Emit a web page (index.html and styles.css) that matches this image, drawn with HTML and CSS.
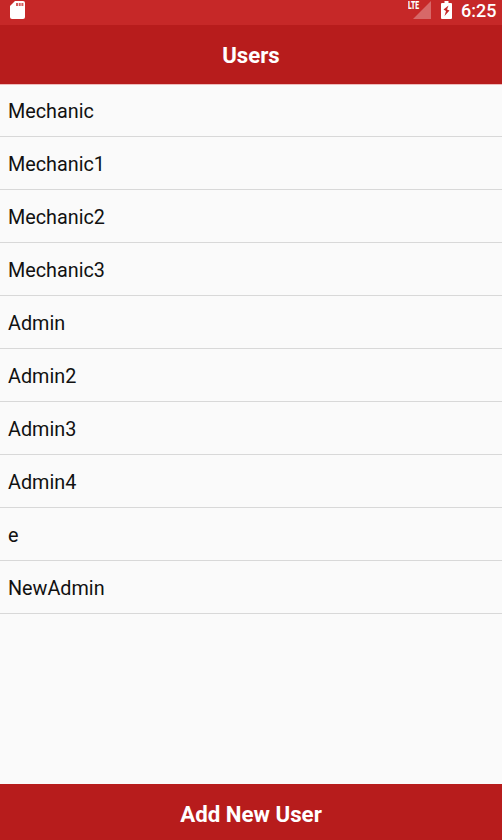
FILE: index.html
```html
<!DOCTYPE html>
<html lang="en">
<head>
<meta charset="utf-8">
<title>Users</title>
<link rel="stylesheet" href="styles.css">
</head>
<body>
<div class="screen">
  <div class="status">
    <svg class="sd" width="15" height="18" viewBox="0 0 15 18"><path fill="#fff" d="M5 0H13Q15 0 15 2V16Q15 18 13 18H2Q0 18 0 16V5Z"/><path fill="#c62828" fill-opacity=".75" d="M6 2H8V5H6ZM8.700 2H10.700V5H8.700ZM11.400 2H13.400V5H11.400Z"/></svg>
    <div class="signal"><span class="lte">LTE</span><svg width="18" height="18" viewBox="0 0 18 18"><path fill="#fff" fill-opacity=".3" d="M18 0V18H0Z"/></svg></div>
    <svg class="battery" width="11" height="18" viewBox="0 0 11 18"><path fill="#fff" fill-rule="evenodd" d="M3.500 0H7.500V2H10Q11 2 11 3V17Q11 18 10 18H1Q0 18 0 17V3Q0 2 1 2H3.500ZM7.500 4.500L2.500 8.500L5 10L3.500 15L8.500 9.500L6 8.500Z"/></svg>
    <span class="time">6:25</span>
  </div>
  <header class="bar">Users</header>
  <ul class="list">
    <li>Mechanic</li>
    <li>Mechanic1</li>
    <li>Mechanic2</li>
    <li>Mechanic3</li>
    <li>Admin</li>
    <li>Admin2</li>
    <li>Admin3</li>
    <li>Admin4</li>
    <li>e</li>
    <li>NewAdmin</li>
  </ul>
  <button class="add">Add New User</button>
</div>
</body>
</html>
```
FILE: styles.css
```css
* { box-sizing: border-box; }
body { margin: 0; font-family: Roboto, sans-serif; }
.screen { display: flex; flex-direction: column; height: 840px; background: #fafafa; color: #000; overflow: hidden; }
.status { display: flex; height: 25px; padding: 1px 6px 0 10px; background: #c62828; color: #fff; }
.signal { position: relative; width: 23px; margin-left: auto; }
.signal svg { display: block; margin-left: auto; }
.lte { position: absolute; left: 0; top: 0; font-size: 11px; line-height: 10px; font-weight: 900; transform: scaleX(.62); transform-origin: 0 0; }
.battery { margin-left: 10px; }
.time { width: 35px; margin-left: 9px; font-size: 18px; line-height: 20px; font-weight: 500; white-space: nowrap; }
.bar { height: 59px; background: #b71c1c; color: #fff; font-size: 22.2px; line-height: 61px; font-weight: 700; text-align: center; }
.list { flex: 1; margin: 0; padding: 0; list-style: none; box-shadow: inset 0 1px #eebcbc; }
.list li { height: 53px; padding-left: 8px; border-bottom: 1px solid #d8d8d8; color: #111; font-size: 19.8px; line-height: 56px; }
.add { height: 56px; padding: 4px 0 0; border: 0; background: #b71c1c; color: #fff; font: 700 22.3px Roboto, sans-serif; }
```
